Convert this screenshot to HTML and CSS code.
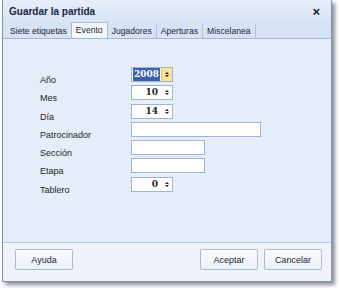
FILE: index.html
```html
<!DOCTYPE html>
<html>
<head><meta charset="utf-8"><link rel="stylesheet" href="styles.css"></head>
<body>
<div class="dialog">
  <div class="titlebar">
    <span class="title">Guardar la partida</span>
    <span class="close">×</span>
  </div>
  <div class="tabs">
    <span class="tab">Siete etiquetas</span>
    <span class="tab active">Evento</span>
    <span class="tab">Jugadores</span>
    <span class="tab">Aperturas</span>
    <span class="tab">Miscelanea</span>
  </div>
  <div class="panel">
    <div class="form">
      <label>Año</label>
      <div class="spin"><span class="val sel">2008</span><span class="arrows hot"><i class="up"></i><i class="dn"></i></span></div>
      <label>Mes</label>
      <div class="spin"><span class="val">10</span><span class="arrows"><i class="up"></i><i class="dn"></i></span></div>
      <label>Día</label>
      <div class="spin"><span class="val">14</span><span class="arrows"><i class="up"></i><i class="dn"></i></span></div>
      <label>Patrocinador</label>
      <div class="text long"></div>
      <label>Sección</label>
      <div class="text"></div>
      <label>Etapa</label>
      <div class="text"></div>
      <label>Tablero</label>
      <div class="spin"><span class="val">0</span><span class="arrows"><i class="up"></i><i class="dn"></i></span></div>
    </div>
  </div>
  <div class="footer">
    <button class="btn">Ayuda</button>
    <span class="spacer"></span>
    <button class="btn">Aceptar</button>
    <button class="btn">Cancelar</button>
  </div>
</div>
</body>
</html>
```
FILE: styles.css
```css
html, body { margin: 0; padding: 0; background: #fff; }
body { width: 340px; height: 291px; overflow: hidden; font-family: "Liberation Sans", Arial, sans-serif; font-size: 9px; color: #1b1f26; }
.dialog {
  margin: 0 0 0 2px; width: 328px; height: 281px;
  border: 1px solid #7f93b0; border-top: none;
  box-shadow: 3px 3px 4px rgba(40,50,70,0.55);
  display: flex; flex-direction: column;
  background: #eef3fa;
}
.titlebar {
  height: 23px; display: flex; align-items: center; padding: 0 6px;
  background: linear-gradient(#e6eef9, #d6e3f4);
}
.title { font-weight: bold; font-size: 10px; color: #15273f; flex: 1; }
.close { font-weight: bold; font-size: 13px; color: #222; margin-right: 5px; line-height: 1; }
.tabs { height: 15px; display: flex; align-items: flex-end; padding-left: 3px; background: #d6e3f4; font-size: 8.6px; }
.tab {
  height: 14px; line-height: 14px; padding: 0 4px; color: #1b2636;
  border-right: 1px solid #b3c5dd;
}
.tab.active { background: #f4f8fd; border: 1px solid #a6bbd7; border-bottom: none; height: 15px; line-height: 15px; margin-left: -1px; }
.panel {
  height: 205px; background: #e5edf8; border-top: 1px solid #a4b9d6; border-bottom: 1px solid #b7c8de;
  padding: 28px 0 0 37px; box-sizing: border-box;
}
.form { display: grid; grid-template-columns: 91px auto; grid-auto-rows: 15px; row-gap: 3.3px; align-items: start; }
.form label { color: #1b1f26; padding-top: 8px; line-height: 10px; }
.spin {
  width: 40px; height: 13px; border: 1px solid #a3b5cc; background: #fff; display: flex; align-items: stretch;
}
.val { flex: 1; text-align: right; font-family: "DejaVu Serif", "Liberation Serif", serif; font-weight: bold; font-size: 9px; line-height: 13px; padding-right: 4px; }
.val.sel { flex: none; margin-left: 1px; margin-right: auto; background: #3a62a6; color: #fff; padding: 0 1px; text-align: left; }
.arrows { width: 10px; display: flex; flex-direction: column; justify-content: center; align-items: center; gap: 1px; }
.arrows.hot { background: #fbe49a; border-left: 1px solid #e0c26a; }
.arrows i { width: 0; height: 0; border-left: 2px solid transparent; border-right: 2px solid transparent; }
.arrows .up { border-bottom: 2px solid #222; }
.arrows .dn { border-top: 2px solid #222; }
.text { width: 72px; height: 13px; border: 1px solid #a3b5cc; background: #fff; }
.text.long { width: 128px; }
.footer { flex: 1; display: flex; align-items: flex-start; padding: 6px 9px 0 12px; gap: 6px; background: #eef3fa; }
.spacer { flex: 1; }
.btn {
  width: 58px; height: 21px; font-family: "Liberation Sans", Arial, sans-serif; font-size: 9px; color: #1b2636;
  border: 1px solid #adbbcd; border-radius: 2px; background: linear-gradient(#fbfcfe, #eaf0f7); padding: 0;
}
```
